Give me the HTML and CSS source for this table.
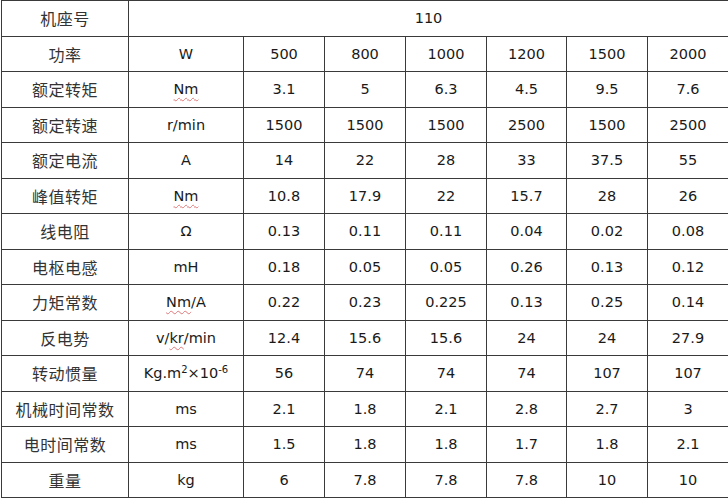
FILE: index.html
```html
<!DOCTYPE html>
<html lang="zh">
<head>
<meta charset="utf-8">
<link rel="stylesheet" href="styles.css">
</head>
<body>
<table class="spec">
<colgroup>
<col class="c-name"><col class="c-unit"><col class="c-v"><col class="c-v"><col class="c-v"><col class="c-v4"><col class="c-v"><col class="c-v">
</colgroup>
<tr><td class="zh">机座号</td><td colspan="7">110</td></tr>
<tr><td class="zh">功率</td><td>W</td><td>500</td><td>800</td><td>1000</td><td>1200</td><td>1500</td><td>2000</td></tr>
<tr><td class="zh">额定转矩</td><td><span class="sp">Nm</span></td><td>3.1</td><td>5</td><td>6.3</td><td>4.5</td><td>9.5</td><td>7.6</td></tr>
<tr><td class="zh">额定转速</td><td>r/min</td><td>1500</td><td>1500</td><td>1500</td><td>2500</td><td>1500</td><td>2500</td></tr>
<tr><td class="zh">额定电流</td><td>A</td><td>14</td><td>22</td><td>28</td><td>33</td><td>37.5</td><td>55</td></tr>
<tr><td class="zh">峰值转矩</td><td><span class="sp">Nm</span></td><td>10.8</td><td>17.9</td><td>22</td><td>15.7</td><td>28</td><td>26</td></tr>
<tr><td class="zh">线电阻</td><td>Ω</td><td>0.13</td><td>0.11</td><td>0.11</td><td>0.04</td><td>0.02</td><td>0.08</td></tr>
<tr><td class="zh">电枢电感</td><td>mH</td><td>0.18</td><td>0.05</td><td>0.05</td><td>0.26</td><td>0.13</td><td>0.12</td></tr>
<tr><td class="zh">力矩常数</td><td><span class="sp">Nm</span>/A</td><td>0.22</td><td>0.23</td><td>0.225</td><td>0.13</td><td>0.25</td><td>0.14</td></tr>
<tr><td class="zh">反电势</td><td>v/<span class="sp">kr</span>/min</td><td>12.4</td><td>15.6</td><td>15.6</td><td>24</td><td>24</td><td>27.9</td></tr>
<tr><td class="zh">转动惯量</td><td>Kg.m<sup>2</sup>×10<sup>-6</sup></td><td>56</td><td>74</td><td>74</td><td>74</td><td>107</td><td>107</td></tr>
<tr><td class="zh">机械时间常数</td><td>ms</td><td>2.1</td><td>1.8</td><td>2.1</td><td>2.8</td><td>2.7</td><td>3</td></tr>
<tr><td class="zh">电时间常数</td><td>ms</td><td>1.5</td><td>1.8</td><td>1.8</td><td>1.7</td><td>1.8</td><td>2.1</td></tr>
<tr><td class="zh">重量</td><td>kg</td><td>6</td><td>7.8</td><td>7.8</td><td>7.8</td><td>10</td><td>10</td></tr>
</table>
</body>
</html>
```
FILE: styles.css
```css
html, body {
  margin: 0;
  padding: 0;
  background: #ffffff;
}
.spec {
  border-collapse: collapse;
  table-layout: fixed;
  width: 727px;
  margin-left: 1px;
  font-family: "DejaVu Sans", Verdana, "Noto Sans CJK SC", sans-serif;
  font-size: 14.5px;
  color: #1a1a1a;
}
.c-name { width: 127px; }
.c-unit { width: 115px; }
.c-v { width: 81px; }
.c-v4 { width: 80px; }
.spec td {
  border: 1px solid #3a3a3a;
  height: 34.5px;
  padding: 0;
  text-align: center;
  vertical-align: middle;
  white-space: nowrap;
}
.spec td.zh {
  font-family: "Noto Sans CJK SC", sans-serif;
  font-size: 16px;
  letter-spacing: 0.5px;
  color: #333333;
}
.sp {
  text-decoration: underline wavy #e07878;
  text-decoration-thickness: 1px;
  text-underline-offset: 3px;
}
sup {
  font-size: 10px;
  vertical-align: 5px;
  line-height: 0;
}
```
